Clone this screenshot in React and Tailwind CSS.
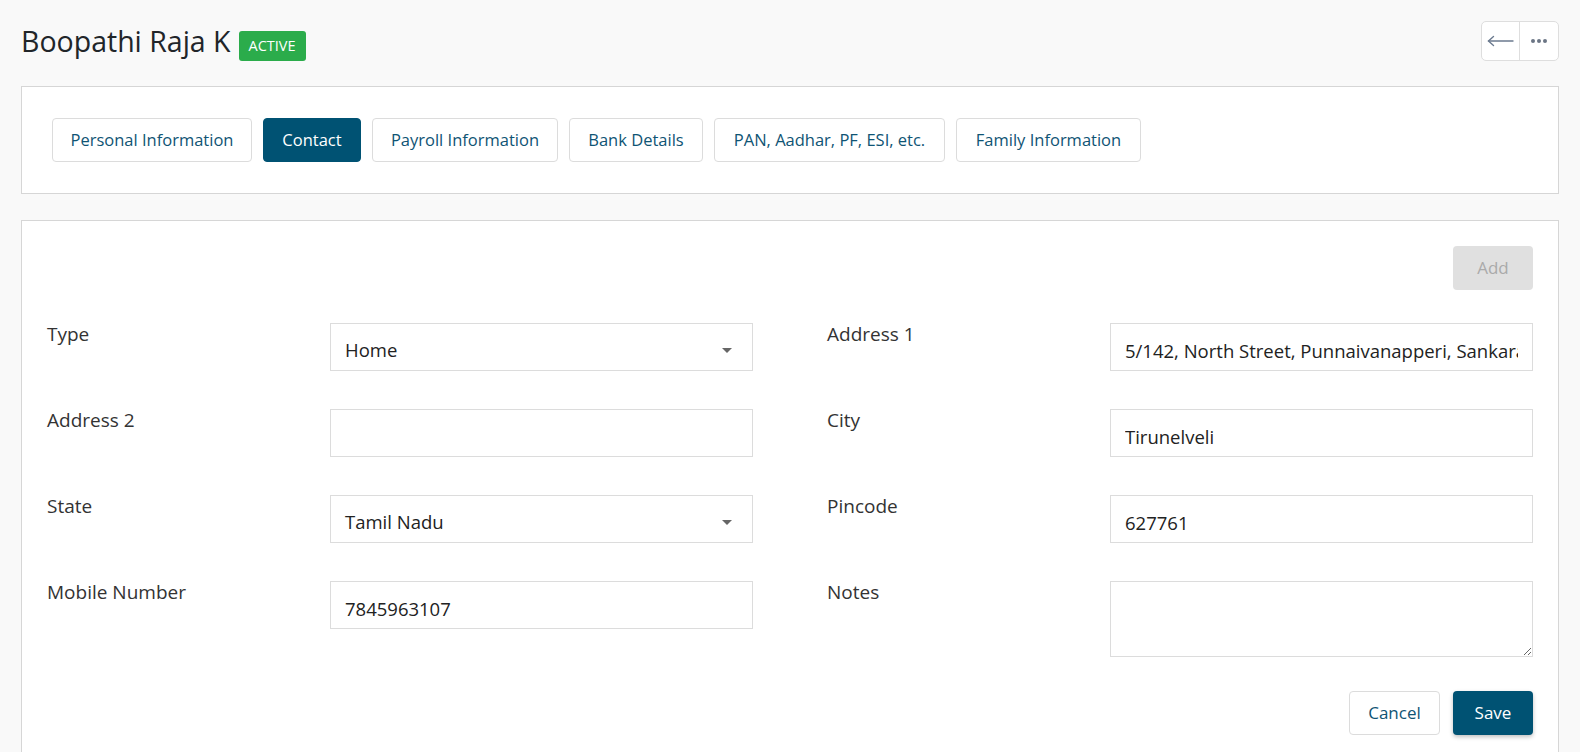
import { useState } from "react";

const tabs = [
  { label: "Personal Information", w: "w-[200px]" },
  { label: "Contact", w: "w-[98px]" },
  { label: "Payroll Information", w: "w-[186px]" },
  { label: "Bank Details", w: "w-[134px]" },
  { label: "PAN, Aadhar, PF, ESI, etc.", w: "w-[231px]" },
  { label: "Family Information", w: "w-[185px]" },
];

function SelectBox({ value }) {
  return (
    <div className="flex h-[48px] items-center justify-between border border-[#dcdcdc] bg-white pl-[14px] pr-[20px] pt-[6px] text-[18.5px] text-[#222]">
      <span>{value}</span>
      <span className="h-0 w-0 border-x-[5px] border-t-[5px] border-x-transparent border-t-[#666]" />
    </div>
  );
}

function TextBox({ value }) {
  return (
    <input
      readOnly
      value={value}
      className="block h-[48px] w-full border border-[#dcdcdc] bg-white px-[14px] pt-[6px] text-[18.5px] text-[#222] outline-none"
    />
  );
}

function Field({ label, children }) {
  return (
    <div className="flex items-start">
      <label className="w-[283px] shrink-0 pt-[3px] text-[19px] leading-[27px] text-[#333]">{label}</label>
      <div className="mt-[5px] min-w-0 flex-1">{children}</div>
    </div>
  );
}

export default function App() {
  const [active, setActive] = useState("Contact");

  return (
    <div
      className="min-h-screen bg-[#f9f9f9] px-[21px] pt-[21px]"
      style={{ fontFamily: '"Open Sans", "Noto Sans", sans-serif' }}
    >
      {/* header */}
      <div className="flex h-[40px] items-start justify-between">
        <div className="flex items-start">
          <h1 className="mt-[3px] text-[28.5px] leading-[34px] text-[#212529]">Boopathi Raja K</h1>
          <span className="ml-2 mt-[10px] flex h-[30px] items-center rounded-[3px] bg-[#2bac4b] px-[10px] text-[14.5px] text-white">
            ACTIVE
          </span>
        </div>
        <div className="flex h-[40px] overflow-hidden rounded-[5px] border border-[#dedede] bg-white">
          <button className="flex w-[38px] items-center justify-center border-r border-[#dedede]">
            <svg width="27" height="12" viewBox="0 0 27 12" fill="none" stroke="#6b7a8f" strokeWidth="1.4" strokeLinecap="round">
              <path d="M1.5 6H26" />
              <path d="M6.5 1.5L1.5 6L6.5 10.5" />
            </svg>
          </button>
          <button className="flex w-[38px] items-center justify-center gap-[2px]">
            <span className="h-[4px] w-[4px] rounded-full bg-[#6b7585]" />
            <span className="h-[4px] w-[4px] rounded-full bg-[#6b7585]" />
            <span className="h-[4px] w-[4px] rounded-full bg-[#6b7585]" />
          </button>
        </div>
      </div>

      {/* tabs */}
      <div className="mt-[25px] border border-[#d6d6d6] bg-white px-[30px] py-[31px]">
        <div className="flex gap-[11px]">
          {tabs.map((t) => (
            <button
              key={t.label}
              onClick={() => setActive(t.label)}
              className={
                t.label === active
                  ? `h-[44px] ${t.w} rounded-[4px] border border-[#005273] bg-[#005273] text-[16.5px] text-white`
                  : `h-[44px] ${t.w} rounded-[4px] border border-[#dcdcdc] bg-white text-[16.5px] text-[#0f5474]`
              }
            >
              {t.label}
            </button>
          ))}
        </div>
      </div>

      {/* contact form */}
      <div className="mt-[26px] border border-[#d6d6d6] bg-white p-[25px]">
        <div className="flex justify-end">
          <button disabled className="h-[44px] w-[80px] rounded-[4px] bg-[#e0e0e0] text-[17px] text-[#aaa]">
            Add
          </button>
        </div>

        <div className="mt-[28px] grid grid-cols-2 gap-x-[74px] gap-y-[33px]">
          <Field label="Type">
            <SelectBox value="Home" />
          </Field>
          <Field label="Address 1">
            <TextBox value="5/142, North Street, Punnaivanapperi, Sankarankovil" />
          </Field>
          <Field label="Address 2">
            <TextBox value="" />
          </Field>
          <Field label="City">
            <TextBox value="Tirunelveli" />
          </Field>
          <Field label="State">
            <SelectBox value="Tamil Nadu" />
          </Field>
          <Field label="Pincode">
            <TextBox value="627761" />
          </Field>
          <Field label="Mobile Number">
            <TextBox value="7845963107" />
          </Field>
          <Field label="Notes">
            <textarea className="block h-[76px] w-full border border-[#dcdcdc] bg-white px-[14px] py-[10px] text-[18px] text-[#222] outline-none" />
          </Field>
        </div>

        <div className="mt-[34px] flex justify-end gap-[13px]">
          <button className="h-[44px] w-[91px] rounded-[4px] border border-[#dcdcdc] bg-white text-[17px] text-[#0f5474]">
            Cancel
          </button>
          <button className="h-[44px] w-[80px] rounded-[4px] bg-[#005273] text-[17px] text-white shadow-[0_2px_4px_rgba(0,0,0,0.25)]">
            Save
          </button>
        </div>
      </div>
    </div>
  );
}
